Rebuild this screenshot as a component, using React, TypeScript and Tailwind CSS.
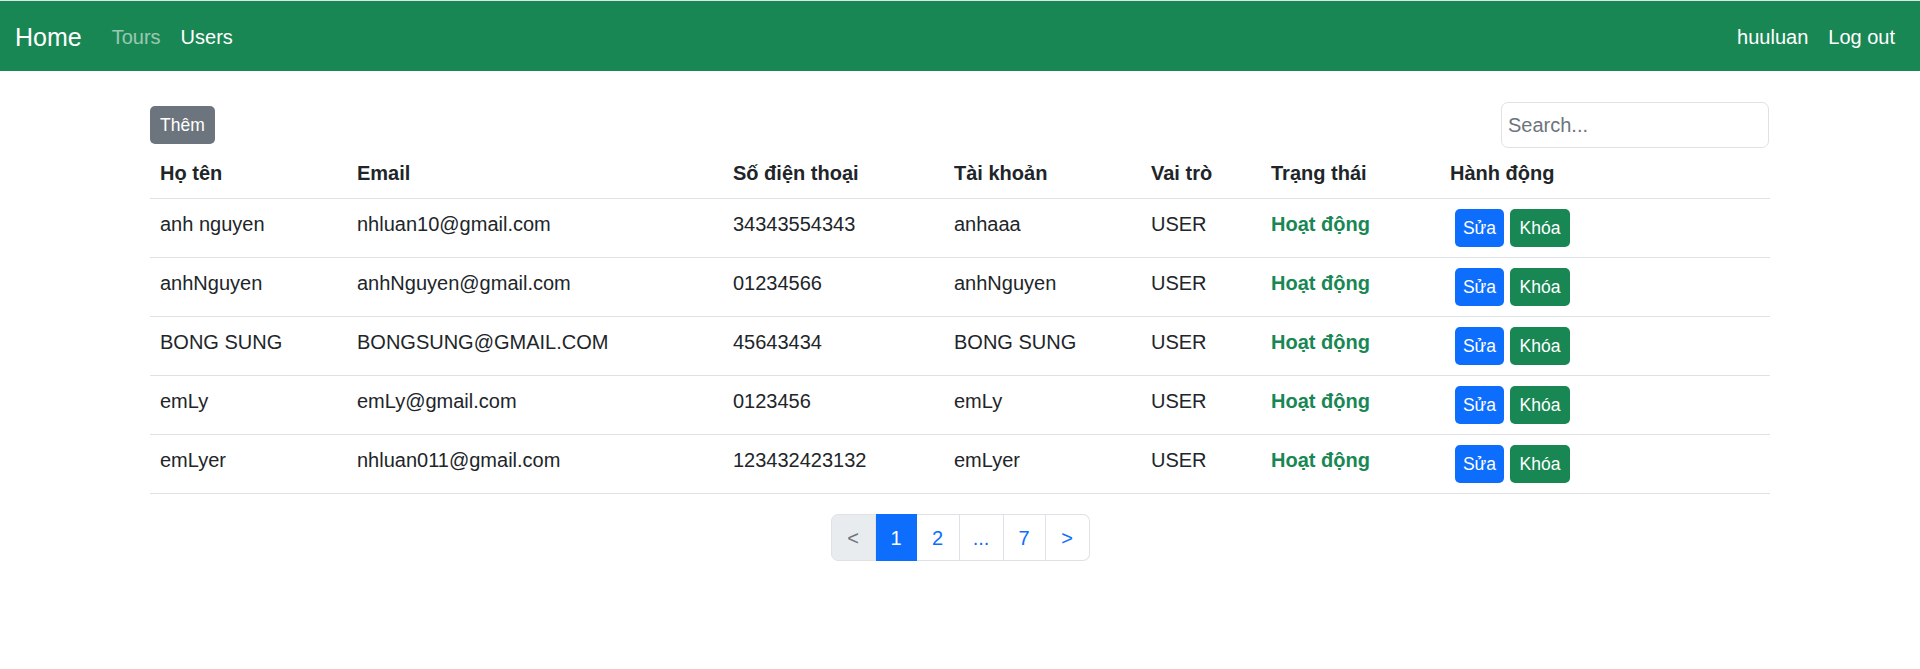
import React from "react";

const rows = [
  { name: "anh nguyen", email: "nhluan10@gmail.com", phone: "34343554343", acc: "anhaaa" },
  { name: "anhNguyen", email: "anhNguyen@gmail.com", phone: "01234566", acc: "anhNguyen" },
  { name: "BONG SUNG", email: "BONGSUNG@GMAIL.COM", phone: "45643434", acc: "BONG SUNG" },
  { name: "emLy", email: "emLy@gmail.com", phone: "0123456", acc: "emLy" },
  { name: "emLyer", email: "nhluan011@gmail.com", phone: "123432423132", acc: "emLyer" },
];

export default function App() {
  return (
    <div
      className="min-h-screen bg-white text-[#212529]"
      style={{ fontFamily: '"Segoe UI", "Liberation Sans", Arial, sans-serif' }}
    >
      <nav className="h-[71px] border-t border-[#d7ebe1] bg-[#198754] flex items-center justify-between px-[15px] pt-[2px]">
        <div className="flex items-center">
          <a className="text-[25px] leading-[37px] text-white mr-[20px]">Home</a>
          <a className="px-[10px] text-[20px] leading-[30px] text-white/55">Tours</a>
          <a className="px-[10px] text-[20px] leading-[30px] text-white">Users</a>
        </div>
        <div className="flex items-center">
          <a className="px-[10px] text-[20px] leading-[30px] text-white">huuluan</a>
          <a className="px-[10px] text-[20px] leading-[30px] text-white">Log out</a>
        </div>
      </nav>

      <main className="px-[150px]">
        <div className="flex items-center justify-between pt-[31px]">
          <button className="h-[38px] px-[10px] rounded-[5px] bg-[#6c757d] text-white text-[17.5px] leading-[26px]">
            Thêm
          </button>
          <input
            placeholder="Search..."
            className="w-[268px] h-[46px] mr-[1px] rounded-[7px] border border-[#dee2e6] px-[6px] text-[20px] placeholder:text-[#6c757d] outline-none"
          />
        </div>

        <table className="w-full table-fixed border-collapse">
          <thead>
            <tr className="border-b border-[#dee2e6]">
              <th className="w-[197px] text-left align-top px-[10px] py-[10px] leading-[30px] text-[20px] font-bold">Họ tên</th>
              <th className="w-[376px] text-left align-top px-[10px] py-[10px] leading-[30px] text-[20px] font-bold">Email</th>
              <th className="w-[221px] text-left align-top px-[10px] py-[10px] leading-[30px] text-[20px] font-bold">Số điện thoại</th>
              <th className="w-[197px] text-left align-top px-[10px] py-[10px] leading-[30px] text-[20px] font-bold">Tài khoản</th>
              <th className="w-[120px] text-left align-top px-[10px] py-[10px] leading-[30px] text-[20px] font-bold">Vai trò</th>
              <th className="w-[179px] text-left align-top px-[10px] py-[10px] leading-[30px] text-[20px] font-bold">Trạng thái</th>
              <th className="text-left align-top px-[10px] py-[10px] leading-[30px] text-[20px] font-bold">Hành động</th>
            </tr>
          </thead>
          <tbody>
            {rows.map((r) => (
              <tr key={r.acc} className="border-b border-[#dee2e6] text-[20px]">
                <td className="align-top px-[10px] py-[10px] leading-[30px]">{r.name}</td>
                <td className="align-top px-[10px] py-[10px] leading-[30px]">{r.email}</td>
                <td className="align-top px-[10px] py-[10px] leading-[30px]">{r.phone}</td>
                <td className="align-top px-[10px] py-[10px] leading-[30px]">{r.acc}</td>
                <td className="align-top px-[10px] py-[10px] leading-[30px]">USER</td>
                <td className="align-top px-[10px] py-[10px] leading-[30px] font-bold text-[#198754]">Hoạt động</td>
                <td className="align-top px-[10px] py-[10px]">
                  <div className="flex items-center gap-[6px] pl-[5px]">
                    <button className="h-[38px] w-[49px] rounded-[5px] bg-[#0d6efd] text-white text-[17.5px] leading-[26px]">
                      Sửa
                    </button>
                    <button className="h-[38px] w-[60px] rounded-[5px] bg-[#198754] text-white text-[17.5px] leading-[26px]">
                      Khóa
                    </button>
                  </div>
                </td>
              </tr>
            ))}
          </tbody>
        </table>

        <div className="flex justify-center mt-[20px]">
          <div className="flex h-[47px] text-[20px]">
            <span className="w-[45px] flex items-center justify-center border border-[#dee2e6] bg-[#e9ecef] text-[#6c757d] rounded-l-[7px]">&lt;</span>
            <span className="w-[41px] flex items-center justify-center border border-[#0d6efd] bg-[#0d6efd] text-white">1</span>
            <span className="w-[43px] flex items-center justify-center border border-l-0 border-[#dee2e6] text-[#0d6efd]">2</span>
            <span className="w-[44px] flex items-center justify-center border border-l-0 border-[#dee2e6] text-[#0d6efd]">...</span>
            <span className="w-[42px] flex items-center justify-center border border-l-0 border-[#dee2e6] text-[#0d6efd]">7</span>
            <span className="w-[44px] flex items-center justify-center border border-l-0 border-[#dee2e6] text-[#0d6efd] rounded-r-[7px]">&gt;</span>
          </div>
        </div>
      </main>
    </div>
  );
}
